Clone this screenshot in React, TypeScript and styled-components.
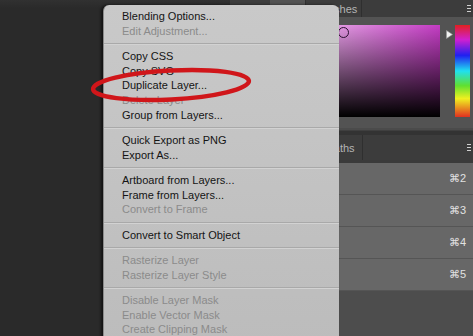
import React from "react";
import styled, { createGlobalStyle } from "styled-components";

const GlobalStyle = createGlobalStyle`
  html, body {
    margin: 0;
    padding: 0;
    background: #2a2a2a;
    overflow: hidden;
  }
  body {
    font-family: "Liberation Sans", Arial, sans-serif;
  }
`;

const Screen = styled.div`
  position: relative;
  width: 473px;
  height: 336px;
  display: flex;
  overflow: hidden;
  background: #2a2a2a;
`;

const Workspace = styled.div`
  flex: 1;
  background: linear-gradient(#313131 0, #2a2a2a 8px);
`;

const PanelColumn = styled.div`
  width: 243px;
  display: flex;
  flex-direction: column;
  background: #4e4e4e;
`;

const TabBar = styled.div<{ $h: number; $pad?: number }>`
  height: ${({ $h }) => $h}px;
  display: flex;
  align-items: stretch;
  padding-left: ${({ $pad = 0 }) => $pad}px;
  background: #3c3c3c;
  color: #b8b8b8;
  font-size: 11px;
`;

const Tab = styled.div<{ $active?: boolean; $w: number }>`
  width: ${({ $w }) => $w}px;
  flex-shrink: 0;
  white-space: nowrap;
  display: flex;
  align-items: center;
  justify-content: center;
  background: ${({ $active }) => ($active ? "#535353" : "transparent")};
  border-right: 1px solid #2f2f2f;
  color: ${({ $active }) => ($active ? "#dcdcdc" : "#b4b4b4")};
`;

const TabFill = styled.div`
  flex: 1;
`;

const PanelMenuIcon = styled.div`
  width: 10px;
  display: flex;
  flex-direction: column;
  justify-content: center;
  gap: 2px;
  padding-right: 2px;

  span {
    display: block;
    height: 1px;
    width: 4px;
    margin-left: auto;
    background: #cfcfcf;
  }
`;

const ColorPanel = styled.div`
  height: 111px;
  display: flex;
  padding: 8px 3px 0 45px;
  box-sizing: border-box;
  background: #535353;
`;

const ColorField = styled.div`
  position: relative;
  width: 165px;
  height: 92px;
  background:
    linear-gradient(to bottom, rgba(0, 0, 0, 0) 0%, rgba(0, 0, 0, 1) 100%),
    linear-gradient(to right, #ffffff 0%, #e6a6e6 30%, #c43cc4 100%);
`;

const Marker = styled.div`
  position: absolute;
  left: 63px;
  top: 2px;
  width: 9px;
  height: 9px;
  border-radius: 50%;
  border: 1px solid #2a1030;
`;

const HueGap = styled.div`
  width: 15px;
  display: flex;
  justify-content: center;
  padding-top: 5px;
  padding-left: 3px;
  box-sizing: border-box;
`;

const HueStrip = styled.div`
  width: 15px;
  height: 92px;
  background: linear-gradient(
    to bottom,
    #e02020 0%,
    #d020d0 16%,
    #2020f0 33%,
    #20e0f0 50%,
    #60e030 66%,
    #f0f020 80%,
    #e03020 100%
  );
`;

const Divider = styled.div`
  height: 7px;
  background: linear-gradient(#4b4b4b 0, #4b4b4b 2px, #333 3px, #333 100%);
`;

const Rows = styled.div`
  padding-top: 3px;
  background: #3a3a3a;
  display: flex;
  flex-direction: column;
`;

const LayerRow = styled.div`
  height: 31px;
  display: flex;
  align-items: center;
  justify-content: flex-end;
  padding-right: 7px;
  background: #676767;
  border-bottom: 1px solid #555;
  color: #e2e2e2;
  font-size: 11px;
`;

const Rest = styled.div`
  flex: 1;
  background: #4d4d4d;
`;

const Menu = styled.div`
  position: absolute;
  left: 103px;
  top: 5px;
  width: 236px;
  height: 340px;
  padding-top: 4px;
  box-sizing: border-box;
  border-radius: 6px 6px 0 0;
  background: linear-gradient(#c9c9c9, #bcbcbc);
  border-left: 1px solid #8a8a8a;
  box-shadow: -2px 0 3px rgba(0, 0, 0, 0.6);
  font-size: 11px;
`;

const Item = styled.div<{ $disabled?: boolean }>`
  height: 14.7px;
  line-height: 14.7px;
  padding-left: 18px;
  white-space: nowrap;
  color: ${({ $disabled }) => ($disabled ? "#8b8b8b" : "#141414")};
`;

const Separator = styled.div`
  height: 10.6px;
  display: flex;
  align-items: center;

  &::after {
    content: "";
    flex: 1;
    height: 1px;
    background: #a9a9a9;
    box-shadow: 0 1px 0 #d2d2d2;
  }
`;

const Annotation = styled.svg`
  position: absolute;
  left: 0;
  top: 0;
  pointer-events: none;
`;

type Entry = { label: string; disabled?: boolean } | "sep";

const entries: Entry[] = [
  { label: "Blending Options..." },
  { label: "Edit Adjustment...", disabled: true },
  "sep",
  { label: "Copy CSS" },
  { label: "Copy SVG" },
  { label: "Duplicate Layer..." },
  { label: "Delete Layer", disabled: true },
  { label: "Group from Layers..." },
  "sep",
  { label: "Quick Export as PNG" },
  { label: "Export As..." },
  "sep",
  { label: "Artboard from Layers..." },
  { label: "Frame from Layers..." },
  { label: "Convert to Frame", disabled: true },
  "sep",
  { label: "Convert to Smart Object" },
  "sep",
  { label: "Rasterize Layer", disabled: true },
  { label: "Rasterize Layer Style", disabled: true },
  "sep",
  { label: "Disable Layer Mask", disabled: true },
  { label: "Enable Vector Mask", disabled: true },
  { label: "Create Clipping Mask", disabled: true },
];

const PanelMenu = () => (
  <PanelMenuIcon>
    <span />
    <span />
    <span />
  </PanelMenuIcon>
);

export default function App() {
  return (
    <>
      <GlobalStyle />
      <Screen>
        <Workspace />
        <PanelColumn>
          <TabBar $h={17} $pad={40}>
            <Tab $active $w={35}>Color</Tab>
            <Tab $w={55}>Swatches</Tab>
            <TabFill />
            <PanelMenu />
          </TabBar>
          <ColorPanel>
            <ColorField>
              <Marker />
            </ColorField>
            <HueGap>
              <svg width="7" height="9" viewBox="0 0 7 9">
                <path d="M0.5 0.5 L6.5 4.5 L0.5 8.5 Z" fill="#f2f2f2" stroke="#9a9a9a" strokeWidth="0.6" />
              </svg>
            </HueGap>
            <HueStrip />
          </ColorPanel>
          <Divider />
          <TabBar $h={25}>
            <Tab $w={38}>Layers</Tab>
            <Tab $w={49}>Channels</Tab>
            <Tab $w={43}>Paths</Tab>
            <TabFill />
            <PanelMenu />
          </TabBar>
          <Rows>
            {["⌘2", "⌘3", "⌘4", "⌘5"].map((k) => (
              <LayerRow key={k}>{k}</LayerRow>
            ))}
          </Rows>
          <Rest />
        </PanelColumn>

        <Menu>
          {entries.map((e, i) =>
            e === "sep" ? (
              <Separator key={i} />
            ) : (
              <Item key={i} $disabled={e.disabled}>
                {e.label}
              </Item>
            )
          )}
        </Menu>

        <Annotation width="473" height="336" viewBox="0 0 473 336">
          <ellipse
            cx="171"
            cy="85"
            rx="78"
            ry="14.5"
            transform="rotate(-3 171 85)"
            fill="none"
            stroke="#d0161a"
            strokeWidth="4.5"
          />
        </Annotation>
      </Screen>
    </>
  );
}
